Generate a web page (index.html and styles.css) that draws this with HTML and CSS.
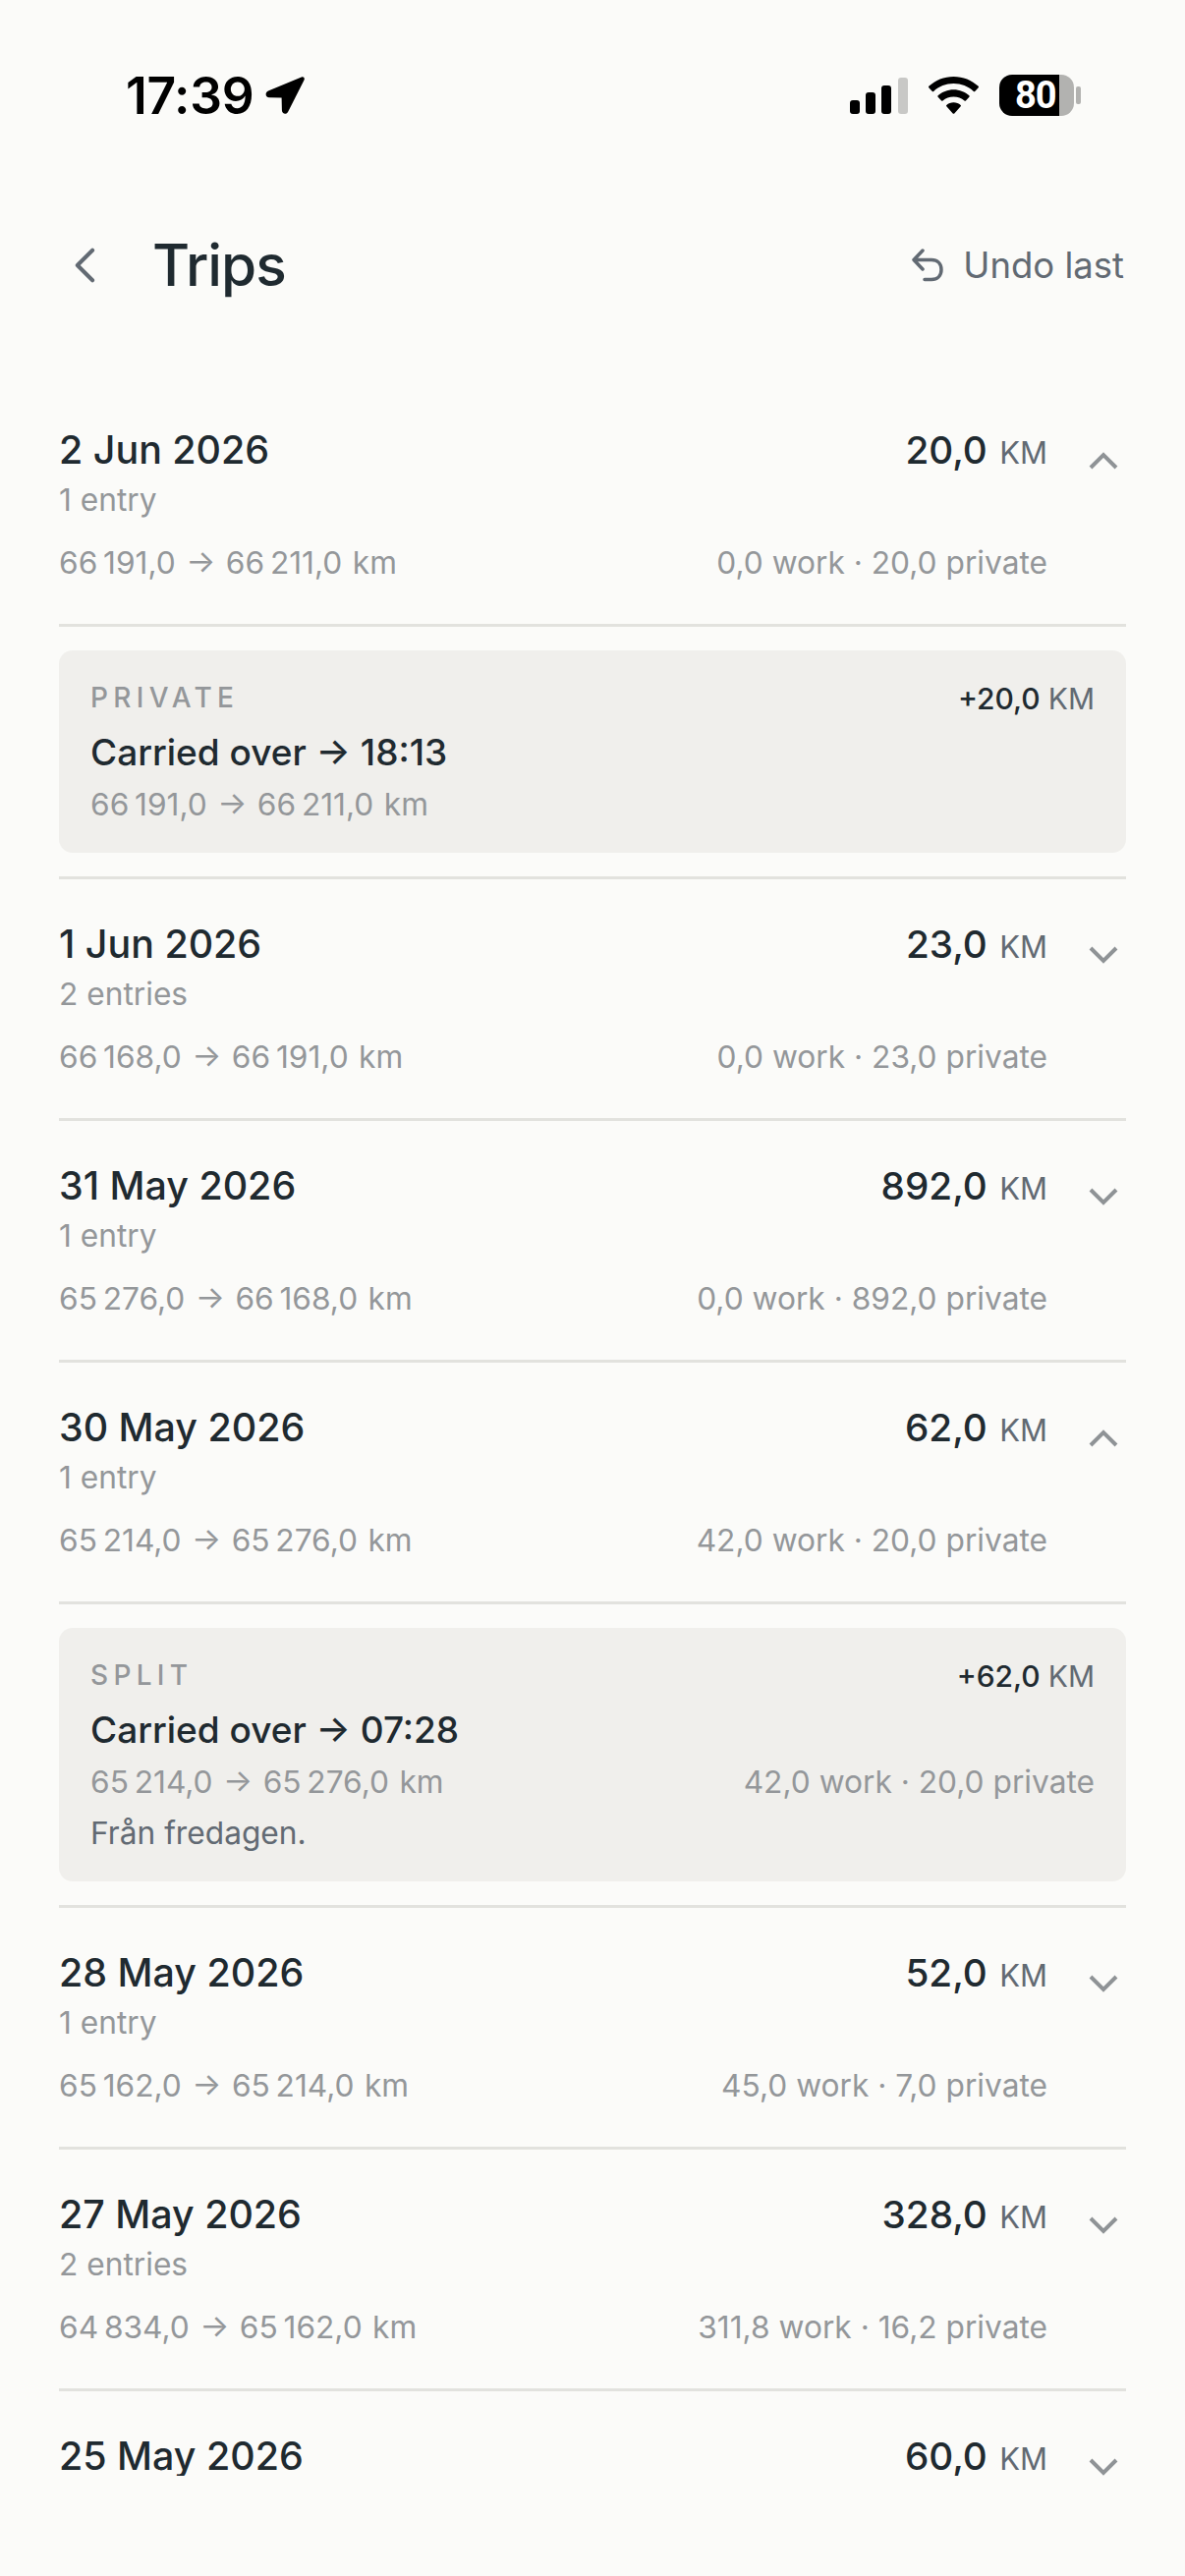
FILE: index.html
```html
<!DOCTYPE html>
<html lang="en">
<head>
<meta charset="utf-8">
<title>Trips</title>
<link rel="stylesheet" href="styles.css">
</head>
<body>
<div class="screen">
  <div class="status">
    <div class="status-left">
      <span class="clock">17:39</span>
      <svg class="loc" viewBox="0 0 40 38"><path d="M36.800.4 3 14.600c-3.600 1.500-3 6.600 1 6.700l12.600.3.300 12.700c.1 4 4.900 4.800 6.400 1.200L39.500 3.400C40.500 1.300 38.900-.5 36.800.4Z"/></svg>
    </div>
    <div class="status-right">
      <svg class="signal" viewBox="0 0 59 37"><rect x="0" y="23" width="10" height="14" rx="3"/><rect x="16" y="15" width="10" height="22" rx="3"/><rect x="32" y="8" width="10" height="29" rx="3"/><rect class="dim" x="49" y="0" width="10" height="37" rx="3"/></svg>
      <svg class="wifi" viewBox="0 0 51 38"><path d="M25.500 0C15.800 0 7 3.700.3 9.800c-.4.400-.4 1 0 1.400l3.500 3.700c.4.400 1 .4 1.400 0 5.400-4.900 12.500-7.800 20.300-7.800s14.900 2.900 20.300 7.800c.4.400 1 .4 1.400 0l3.500-3.700c.4-.4.4-1 0-1.400C44 3.700 35.200 0 25.500 0Z"/><path d="M25.500 13.200c-6.100 0-11.700 2.300-15.900 6.100-.4.400-.4 1 0 1.400l3.500 3.700c.4.400 1 .4 1.400 0 2.900-2.500 6.700-4 11-4s8.100 1.500 11 4c.4.400 1 .4 1.400 0l3.500-3.700c.4-.4.4-1 0-1.400-4.200-3.800-9.800-6.100-15.900-6.100Z"/><path d="M25.500 26.200c-2.800 0-5.300 1-7.200 2.700-.4.400-.4 1 0 1.400l6.400 7.100c.4.500 1.200.5 1.600 0l6.400-7.100c.4-.4.4-1 0-1.400-1.900-1.700-4.400-2.700-7.200-2.700Z"/></svg>
      <div class="battery">
        <div class="batt-body"><span class="batt-num">80</span></div>
        <span class="batt-cap"></span>
      </div>
    </div>
  </div>

  <header class="topbar">
    <div class="topbar-left">
      <svg class="back" viewBox="0 0 24 40"><path d="M21 3 4 20l17 17"/></svg>
      <h1 class="title">Trips</h1>
    </div>
    <div class="undo">
      <svg class="undo-icon" viewBox="0 0 34 36"><path d="M12 3 3 12.500l9 9.500M3 12.500h18c6 0 10 4 10 10s-4 10-10 10h-7"/></svg>
      <span>Undo last</span>
    </div>
  </header>

  <main class="list">
    <section class="day">
      <div class="day-head">
        <div class="day-main">
          <div class="day-top"><span class="date">2 Jun 2026</span><span class="total">20,0 <small>KM</small></span></div>
          <div class="entries">1 entry</div>
          <div class="day-bottom"><span class="range">66&#8239;191,0 → 66&#8239;211,0 km</span><span>0,0 work · 20,0 private</span></div>
        </div>
        <svg class="chev" viewBox="0 0 30 20"><path d="M2 17 15 4l13 13"/></svg>
      </div>
    </section>
    <div class="detail">
      <article class="entry">
        <div class="entry-top"><span class="kind">PRIVATE</span><span class="delta">+20,0 <small>KM</small></span></div>
        <div class="entry-title">Carried over → 18:13</div>
        <div class="entry-range"><span class="range">66&#8239;191,0 → 66&#8239;211,0 km</span></div>
      </article>
    </div>

    <section class="day">
      <div class="day-head">
        <div class="day-main">
          <div class="day-top"><span class="date">1 Jun 2026</span><span class="total">23,0 <small>KM</small></span></div>
          <div class="entries">2 entries</div>
          <div class="day-bottom"><span class="range">66&#8239;168,0 → 66&#8239;191,0 km</span><span>0,0 work · 23,0 private</span></div>
        </div>
        <svg class="chev" viewBox="0 0 30 20"><path d="M2 3 15 16 28 3"/></svg>
      </div>
    </section>

    <section class="day">
      <div class="day-head">
        <div class="day-main">
          <div class="day-top"><span class="date">31 May 2026</span><span class="total">892,0 <small>KM</small></span></div>
          <div class="entries">1 entry</div>
          <div class="day-bottom"><span class="range">65&#8239;276,0 → 66&#8239;168,0 km</span><span>0,0 work · 892,0 private</span></div>
        </div>
        <svg class="chev" viewBox="0 0 30 20"><path d="M2 3 15 16 28 3"/></svg>
      </div>
    </section>

    <section class="day">
      <div class="day-head">
        <div class="day-main">
          <div class="day-top"><span class="date">30 May 2026</span><span class="total">62,0 <small>KM</small></span></div>
          <div class="entries">1 entry</div>
          <div class="day-bottom"><span class="range">65&#8239;214,0 → 65&#8239;276,0 km</span><span>42,0 work · 20,0 private</span></div>
        </div>
        <svg class="chev" viewBox="0 0 30 20"><path d="M2 17 15 4l13 13"/></svg>
      </div>
    </section>
    <div class="detail">
      <article class="entry">
        <div class="entry-top"><span class="kind">SPLIT</span><span class="delta">+62,0 <small>KM</small></span></div>
        <div class="entry-title">Carried over → 07:28</div>
        <div class="entry-range"><span class="range">65&#8239;214,0 → 65&#8239;276,0 km</span><span>42,0 work · 20,0 private</span></div>
        <div class="entry-note">Från fredagen.</div>
      </article>
    </div>

    <section class="day">
      <div class="day-head">
        <div class="day-main">
          <div class="day-top"><span class="date">28 May 2026</span><span class="total">52,0 <small>KM</small></span></div>
          <div class="entries">1 entry</div>
          <div class="day-bottom"><span class="range">65&#8239;162,0 → 65&#8239;214,0 km</span><span>45,0 work · 7,0 private</span></div>
        </div>
        <svg class="chev" viewBox="0 0 30 20"><path d="M2 3 15 16 28 3"/></svg>
      </div>
    </section>

    <section class="day">
      <div class="day-head">
        <div class="day-main">
          <div class="day-top"><span class="date">27 May 2026</span><span class="total">328,0 <small>KM</small></span></div>
          <div class="entries">2 entries</div>
          <div class="day-bottom"><span class="range">64&#8239;834,0 → 65&#8239;162,0 km</span><span>311,8 work · 16,2 private</span></div>
        </div>
        <svg class="chev" viewBox="0 0 30 20"><path d="M2 3 15 16 28 3"/></svg>
      </div>
    </section>

    <section class="day">
      <div class="day-head">
        <div class="day-main">
          <div class="day-top"><span class="date">25 May 2026</span><span class="total">60,0 <small>KM</small></span></div>
        </div>
        <svg class="chev" viewBox="0 0 30 20"><path d="M2 3 15 16 28 3"/></svg>
      </div>
    </section>
  </main>
</div>
</body>
</html>
```
FILE: styles.css
```css
* { box-sizing: border-box; }
html, body { margin: 0; padding: 0; }
body {
  background: #fbfbf9;
  color: #1f2a30;
  font-family: Inter, "Liberation Sans", sans-serif;
}
.screen { width: 1206px; height: 2622px; overflow: hidden; }

.status {
  height: 237px;
  padding: 72px 106px 0 128px;
  display: flex;
  justify-content: space-between;
  align-items: flex-start;
  color: #000;
}
.status-left { display: flex; align-items: center; gap: 12px; height: 50px; }
.clock { font-size: 51.500px; font-weight: 600; line-height: 50px; letter-spacing: -0.3px; }
.loc { width: 40px; height: 38px; fill: #000; }
.status-right { display: flex; align-items: center; gap: 21px; height: 50px; }
.signal { width: 59px; height: 37px; fill: #000; }
.signal .dim { fill: #c8c8c6; }
.wifi { width: 51px; height: 38px; fill: #000; }
.battery { display: flex; align-items: center; gap: 2px; }
.batt-body {
  width: 76px;
  height: 42px;
  border-radius: 13px;
  background: linear-gradient(90deg, #000 0, #000 61px, #b2b2b0 61px);
  display: flex;
  align-items: center;
  padding-left: 16px;
}
.batt-num { color: #fff; font-size: 38px; font-weight: 700; line-height: 42px; letter-spacing: -1px; font-family: Roboto, sans-serif; }
.batt-cap { width: 5px; height: 18px; border-radius: 2px; background: #b2b2b0; }

.topbar {
  height: 155px;
  padding: 0 62px 0 75px;
  display: flex;
  justify-content: space-between;
  align-items: flex-start;
}
.topbar-left { display: flex; align-items: center; gap: 58px; height: 66px; }
.back { width: 22px; height: 36px; fill: none; stroke: #626a73; stroke-width: 4.500; stroke-linecap: round; stroke-linejoin: round; }
.title { margin: 0; font-size: 58.500px; font-weight: 500; line-height: 66px; letter-spacing: -1px; }
.undo { display: flex; align-items: center; gap: 19px; height: 66px; color: #626a73; font-size: 36.500px; }
.undo-icon { width: 34px; height: 36px; fill: none; stroke: #626a73; stroke-width: 3.500; stroke-linecap: round; stroke-linejoin: round; }

.list { height: 2128px; overflow: hidden; padding: 0 60px; }

.day { border-bottom: 3px solid #e2e2de; height: 246px; }
.day-head { display: flex; gap: 42px; align-items: flex-start; }
.day-main { flex: 1; padding-top: 38px; }
.day-top { display: flex; justify-content: space-between; align-items: baseline; height: 56px; line-height: 57px; }
.date { font-size: 39.400px; font-weight: 460; }
.total { font-size: 38.700px; font-weight: 460; }
.total small { font-size: 31px; font-weight: 400; color: #626a73; margin-left: 2px; }
.entries { font-size: 31.700px; line-height: 46px; color: #94979a; }
.day-bottom {
  display: flex;
  justify-content: space-between;
  margin-top: 18px;
  font-size: 31.700px;
  line-height: 46px;
  color: #94979a;
}
.range { word-spacing: 1.500px; }
.chev { width: 30px; height: 20px; margin: 67px 8px 0 0; fill: none; stroke: #8f9396; stroke-width: 4; flex: none; }

.detail { border-bottom: 3px solid #e2e2de; padding: 24px 0; }
.entry { background: #f0efec; border-radius: 14px; padding: 26px 32px 28px; }
.entry-top { display: flex; justify-content: space-between; align-items: flex-start; height: 46px; line-height: 46px; }
.kind { font-size: 28px; font-weight: 500; line-height: 45px; letter-spacing: 5.300px; color: #94979a; }
.delta { font-size: 30px; font-weight: 460; }
.delta small { font-size: 30px; font-weight: 400; color: #626a73; }
.entry-title { font-size: 37px; font-weight: 460; line-height: 64px; }
.entry-range { display: flex; justify-content: space-between; font-size: 31.700px; line-height: 42px; color: #94979a; }
.entry-note { font-size: 31.700px; line-height: 42px; margin-top: 10px; color: #626a73; }
```
